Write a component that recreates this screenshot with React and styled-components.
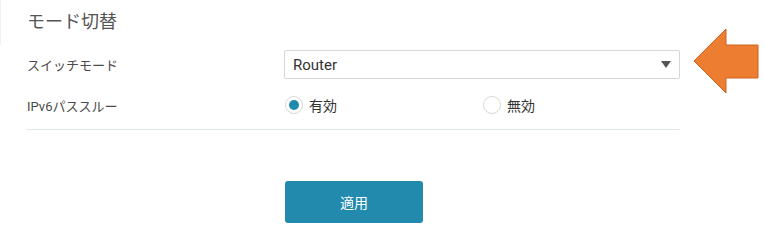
import styled, { createGlobalStyle } from "styled-components";

const Global = createGlobalStyle`
    body {
        margin: 0;
        background: #ffffff;
        font-family: Roboto, "Noto Sans CJK JP", sans-serif;
    }
`

export default function App() {
    return (
        <Swrapper>
            <Global />
            <Sedge />
            <Sh2>モード切替</Sh2>
            <Srow>
                <Slabel>スイッチモード</Slabel>
                <Sselect>
                    <span>Router</span>
                    <Scaret />
                </Sselect>
            </Srow>
            <Srow $gap={16}>
                <Slabel>IPv6パススルー</Slabel>
                <Sradios>
                    <Soption>
                        <Sradio $checked />
                        <span>有効</span>
                    </Soption>
                    <Soption>
                        <Sradio />
                        <span>無効</span>
                    </Soption>
                </Sradios>
            </Srow>
            <Shr />
            <Sfooter>
                <Sbutton>適用</Sbutton>
            </Sfooter>
            <Sarrow width="72" height="66" viewBox="0 0 72 66">
                <path d="M1 33 L33 1 L33 17 L65 17 L65 50 L33 50 L33 65 Z" fill="#ed7d31" stroke="#c9651f" strokeWidth="1" />
            </Sarrow>
        </Swrapper>
    )
}

const Swrapper = styled.div`
    position: relative;
    width: 764px;
    height: 236px;
    box-sizing: border-box;
    padding: 10px 0 0 27px;
    overflow: hidden;
`

const Sedge = styled.div`
    position: absolute;
    left: 0;
    top: 0;
    width: 1px;
    height: 45px;
    background: #f0f0f0;
`

const Sh2 = styled.h2`
    margin: 0 0 16px;
    font-size: 18px;
    font-weight: 400;
    line-height: 24px;
    color: #555555;
`

const Srow = styled.div`
    display: flex;
    align-items: center;
    margin-top: ${p => p.$gap || 0}px;
`

const Slabel = styled.div`
    width: 257px;
    font-size: 13px;
    color: #4a4a4a;
`

const Sselect = styled.div`
    width: 396px;
    height: 29px;
    box-sizing: border-box;
    border: 1px solid #d6d6d6;
    border-radius: 2px;
    display: flex;
    align-items: center;
    justify-content: space-between;
    padding: 0 8px 0 8px;
    font-size: 15px;
    color: #333333;
`

const Scaret = styled.div`
    width: 0;
    height: 0;
    border-left: 5px solid transparent;
    border-right: 5px solid transparent;
    border-top: 7px solid #555555;
`

const Sradios = styled.div`
    display: flex;
    width: 396px;
`

const Soption = styled.label`
    display: flex;
    align-items: center;
    gap: 6px;
    width: 199px;
    padding-left: 1px;
    font-size: 14px;
    color: #333333;
`

const Sradio = styled.span`
    width: 18px;
    height: 18px;
    box-sizing: border-box;
    border-radius: 50%;
    border: 1px solid #d8d8d8;
    background: #fff;
    display: flex;
    align-items: center;
    justify-content: center;
    &::after {
        content: "";
        width: 10px;
        height: 10px;
        border-radius: 50%;
        background: ${p => p.$checked ? "#2189ad" : "transparent"};
    }
`

const Shr = styled.div`
    width: 653px;
    height: 1px;
    background: #dfe6e6;
    margin-top: 14px;
`

const Sfooter = styled.div`
    padding: 51px 0 0 258px;
`

const Sbutton = styled.button`
    width: 138px;
    height: 42px;
    border: none;
    border-radius: 3px;
    background: #228aad;
    color: #ffffff;
    font-family: Roboto, "Noto Sans CJK JP", sans-serif;
    font-size: 14px;
`

const Sarrow = styled.svg`
    position: absolute;
    left: 693px;
    top: 28px;
`
